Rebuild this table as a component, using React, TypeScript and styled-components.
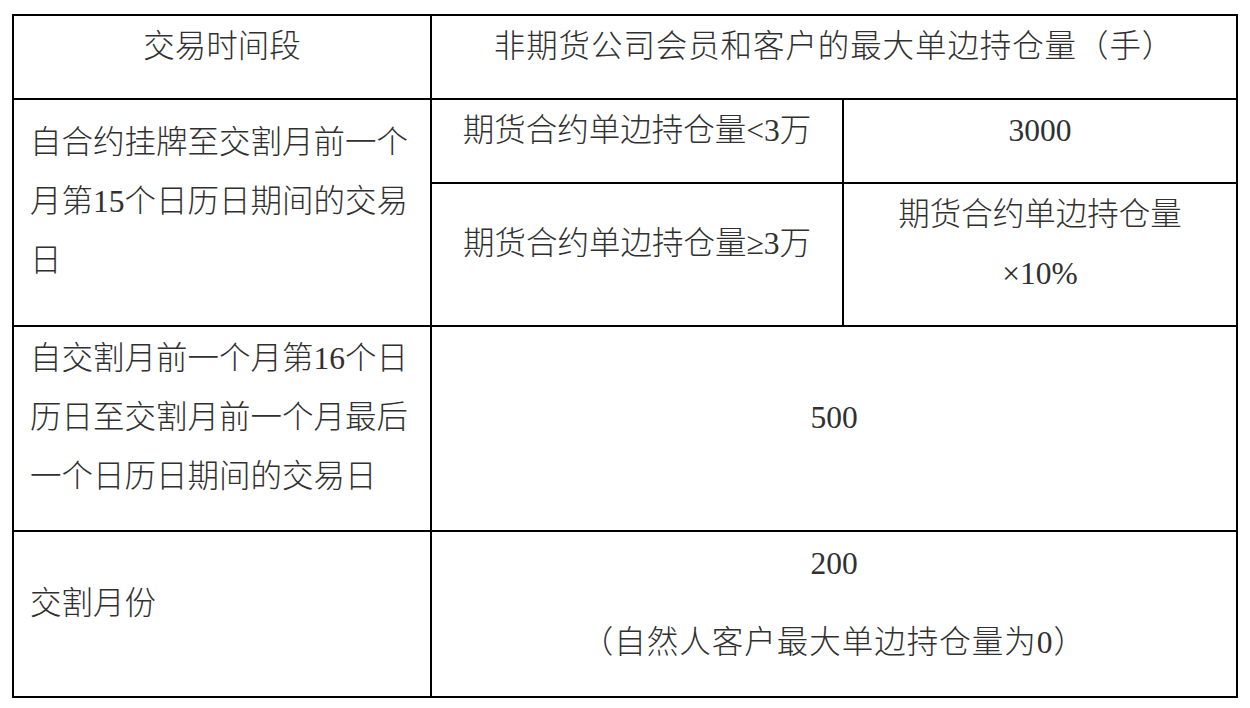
import styled, { createGlobalStyle } from 'styled-components';

const GlobalStyle = createGlobalStyle`
  html, body {
    margin: 0;
    padding: 0;
    background: #fff;
  }
  body {
    font-family: "Liberation Serif", "Noto Sans CJK SC", serif;
    color: #303030;
  }
`

const Page = styled.div`
  padding: 14px 0 0 12px;
`

const Grid = styled.div`
  display: grid;
  grid-template-columns: 418px 412px 394px;
  grid-template-rows: 84px 84px 143px 205px 166px;
  width: max-content;
  border-top: 2px solid #000;
  border-left: 2px solid #000;
  font-size: 31.5px;
  line-height: 59px;
  font-weight: 300;
`

const Cell = styled.div<{ $col: string; $row: string; $align?: 'left' | 'center' }>`
  grid-column: ${p => p.$col};
  grid-row: ${p => p.$row};
  box-sizing: border-box;
  border-right: 2px solid #000;
  border-bottom: 2px solid #000;
  display: flex;
  flex-direction: column;
  justify-content: center;
  padding: ${p => (p.$align === 'left' ? '0 23px 22px 16px' : '0 6px 22px 6px')};
  text-align: ${p => p.$align || 'center'};
  white-space: nowrap;
`

const Line = styled.span<{ $justify?: boolean }>`
  display: block;
  text-align: ${p => (p.$justify ? 'justify' : 'left')};
  text-align-last: ${p => (p.$justify ? 'justify' : 'left')};
`

const Para = styled.p`
  margin: 0;
  & + & {
    margin-top: 20px;
  }
`

const Wide = styled.span<{ $space: number }>`
  letter-spacing: ${p => p.$space}px;
`

function JustifiedLines({ lines }: { lines: string[] }) {
  return (
    <>
      {lines.map((l, i) => (
        <Line key={i} $justify={i < lines.length - 1}>{l}</Line>
      ))}
    </>
  )
}

function App() {
  return (
    <Page>
      <GlobalStyle />
      <Grid>
        <Cell $col="1" $row="1">交易时间段</Cell>
        <Cell $col="2 / 4" $row="1"><Wide $space={0.9}>非期货公司会员和客户的最大单边持仓量（手）</Wide></Cell>

        <Cell $col="1" $row="2 / 4" $align="left">
          <JustifiedLines lines={['自合约挂牌至交割月前一个', '月第15个日历日期间的交易', '日']} />
        </Cell>
        <Cell $col="2" $row="2">期货合约单边持仓量&lt;3万</Cell>
        <Cell $col="3" $row="2">3000</Cell>
        <Cell $col="2" $row="3">期货合约单边持仓量≥3万</Cell>
        <Cell $col="3" $row="3">期货合约单边持仓量<br />×10%</Cell>

        <Cell $col="1" $row="4" $align="left">
          <JustifiedLines lines={['自交割月前一个月第16个日', '历日至交割月前一个月最后', '一个日历日期间的交易日']} />
        </Cell>
        <Cell $col="2 / 4" $row="4">500</Cell>

        <Cell $col="1" $row="5" $align="left">交割月份</Cell>
        <Cell $col="2 / 4" $row="5">
          <Para>200</Para>
          <Para><Wide $space={1}>（自然人客户最大单边持仓量为0）</Wide></Para>
        </Cell>
      </Grid>
    </Page>
  );
}

export default App;
